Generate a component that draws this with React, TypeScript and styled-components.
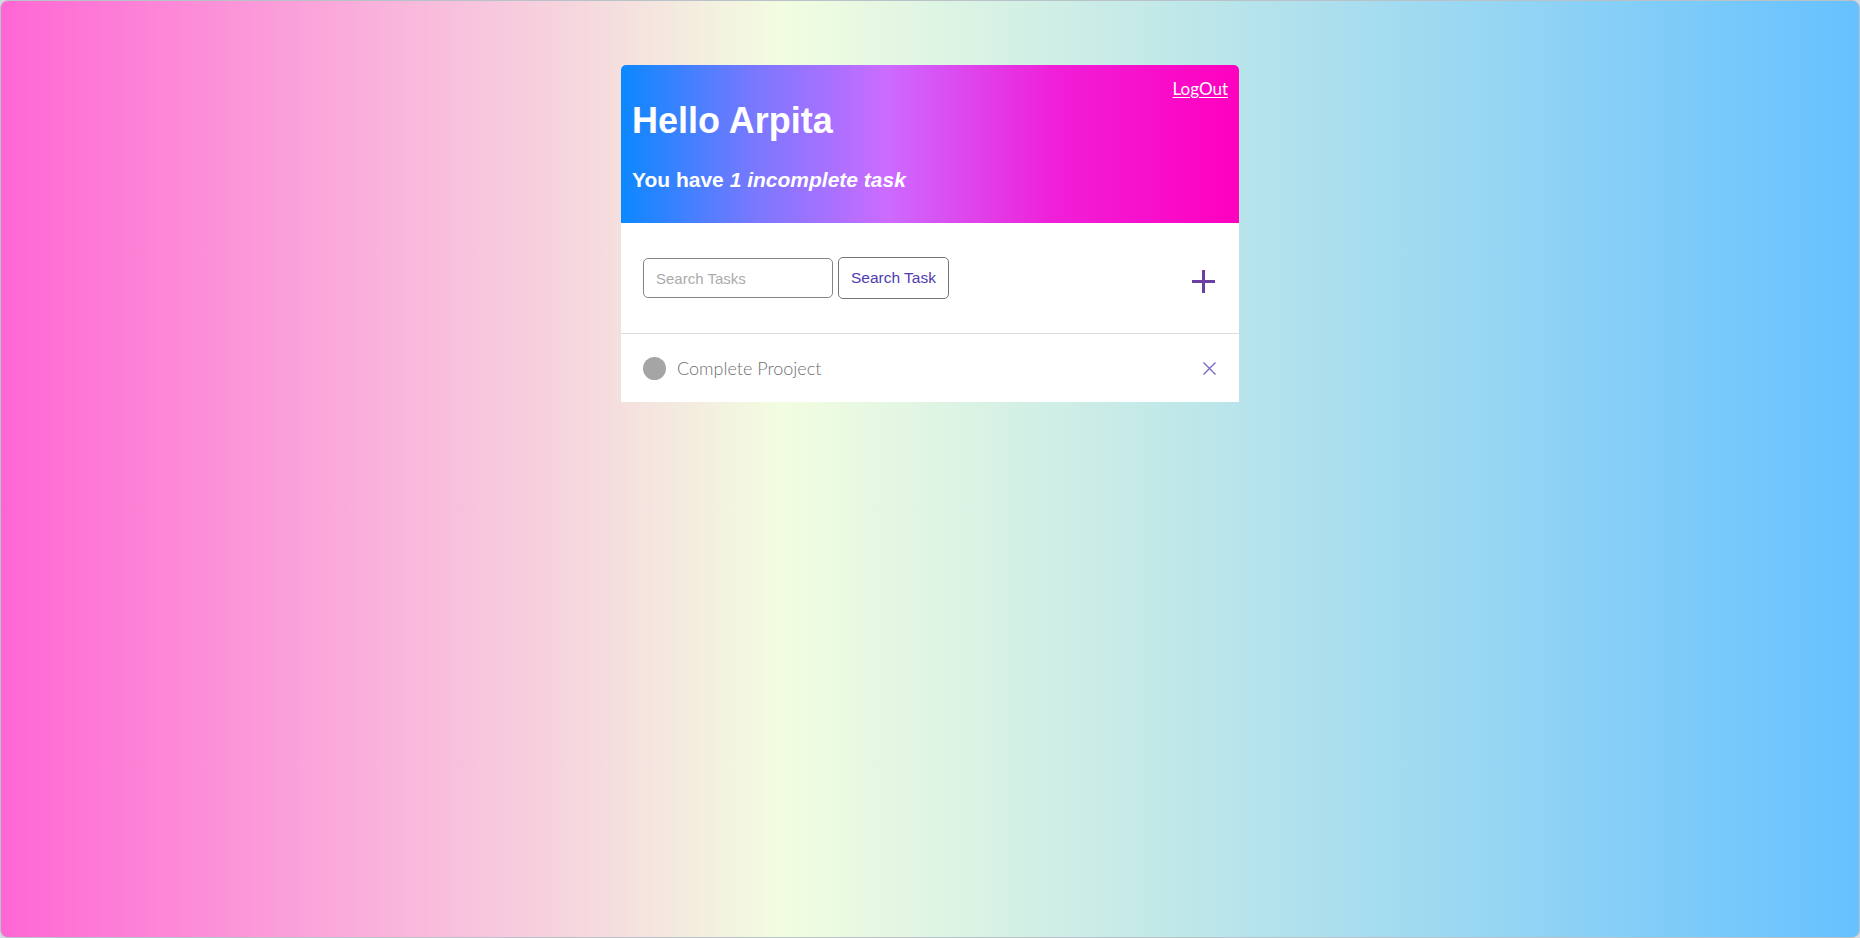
import React from "react";
import styled, { createGlobalStyle } from "styled-components";

const Global = createGlobalStyle`
  html, body { margin: 0; padding: 0; background: #d6dbe1; }
  * { box-sizing: border-box; }
`;

const Page = styled.div`
  width: 1860px;
  height: 938px;
  border: 1px solid #b9c1c9;
  border-radius: 8px;
  overflow: hidden;
  background: linear-gradient(90deg, #ff66d4 0%, #f9b8dc 22%, #f2fde0 42%, #c3e9e8 62%, #66c1ff 100%);
  display: flex;
  flex-direction: column;
  align-items: center;
  padding-top: 64px;
`;

const Card = styled.div`
  width: 618px;
  background: #fff;
  border-radius: 5px 5px 0 0;
  overflow: hidden;
`;

const Header = styled.header`
  display: flex;
  flex-direction: column;
  padding: 14px 11px 31px 11px;
  background: linear-gradient(90deg, #0b88ff 0%, #7b78ff 22%, #cc6bff 43%, #f01fd8 70%, #ff00bf 100%);
  color: #fff;
`;

const LogOut = styled.a`
  align-self: flex-end;
  font-family: Lato, "Open Sans", sans-serif;
  font-size: 17px;
  line-height: 20px;
  color: #fff;
  text-decoration: underline;
  text-underline-offset: 2px;
  cursor: pointer;
`;

const Title = styled.h1`
  margin: 2px 0 0 0;
  font-family: "Liberation Sans", Arial, sans-serif;
  font-weight: 700;
  font-size: 36px;
  line-height: 40px;
`;

const Subtitle = styled.h3`
  margin: 27px 0 0 0;
  font-family: "Liberation Sans", Arial, sans-serif;
  font-weight: 700;
  font-size: 21px;
  line-height: 24px;

  em { font-style: italic; }
`;

const SearchRow = styled.div`
  height: 111px;
  display: flex;
  align-items: center;
  padding: 0 23px 0 22px;
  border-bottom: 1px solid #dcdcdc;
`;

const SearchInput = styled.input`
  width: 190px;
  height: 40px;
  border: 1px solid #858585;
  border-radius: 5px;
  padding: 0 12px;
  font-family: "Liberation Sans", Arial, sans-serif;
  font-size: 15px;
  color: #333;
  outline: none;
  &::placeholder { color: #ababab; }
`;

const SearchButton = styled.button`
  margin-left: 5px;
  width: 111px;
  height: 42px;
  border: 1px solid #767676;
  border-radius: 5px;
  background: #fff;
  font-family: "Liberation Sans", Arial, sans-serif;
  font-size: 15.5px;
  color: #4f3cae;
  cursor: pointer;
`;

const AddButton = styled.button`
  margin-left: auto;
  margin-top: 6px;
  width: 25px;
  height: 25px;
  padding: 0;
  border: none;
  background: transparent;
  display: flex;
  cursor: pointer;
`;

const TaskRow = styled.div`
  height: 68px;
  display: flex;
  align-items: center;
  padding: 0 23px 0 22px;
`;

const Dot = styled.span`
  width: 23px;
  height: 23px;
  border-radius: 50%;
  background: #a5a5a5;
  flex: none;
`;

const TaskText = styled.span`
  margin-left: 11px;
  font-family: Lato, "Open Sans", sans-serif;
  font-weight: 300;
  font-size: 18px;
  color: #6f6f6f;
`;

const Remove = styled.button`
  margin-left: auto;
  width: 13px;
  height: 13px;
  padding: 0;
  border: none;
  background: transparent;
  display: flex;
  cursor: pointer;
`;

export default function App() {
  return (
    <>
      <Global />
      <Page>
        <Card>
          <Header>
            <LogOut>LogOut</LogOut>
            <Title>Hello Arpita</Title>
            <Subtitle>
              You have <em>1 incomplete task</em>
            </Subtitle>
          </Header>
          <SearchRow>
            <SearchInput placeholder="Search Tasks" />
            <SearchButton>Search Task</SearchButton>
            <AddButton aria-label="add">
              <svg width="25" height="25" viewBox="0 0 25 25">
                <path d="M12.5 1v23M1 12.5h23" stroke="#6b3fa2" strokeWidth="3" fill="none" />
              </svg>
            </AddButton>
          </SearchRow>
          <TaskRow>
            <Dot />
            <TaskText>Complete Prooject</TaskText>
            <Remove aria-label="remove">
              <svg width="13" height="13" viewBox="0 0 13 13">
                <path d="M0.5 0.5l12 12M12.5 0.5l-12 12" stroke="#7a63c2" strokeWidth="1.3" fill="none" />
              </svg>
            </Remove>
          </TaskRow>
        </Card>
      </Page>
    </>
  );
}
